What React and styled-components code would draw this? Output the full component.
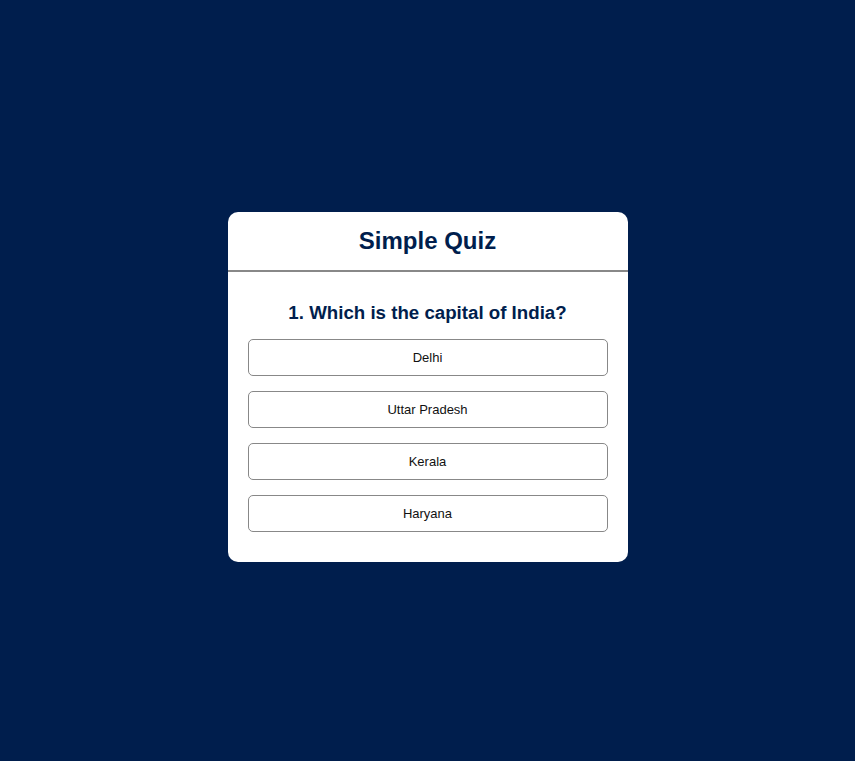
import React from 'react';
import styled, { createGlobalStyle } from 'styled-components';

const GlobalStyle = createGlobalStyle`
  html, body {
    margin: 0;
    padding: 0;
    background: #001e4d;
    font-family: "Liberation Sans", Arial, sans-serif;
  }
`;

const Page = styled.div`
  min-height: 761px;
  box-sizing: border-box;
  padding-top: 212px;
`;

const Card = styled.div`
  width: 400px;
  margin: 0 auto;
  background: #fff;
  border-radius: 10px;
  padding-bottom: 30px;
`;

const Title = styled.h1`
  margin: 0;
  height: 58px;
  display: flex;
  align-items: center;
  justify-content: center;
  font-size: 24px;
  font-weight: 700;
  color: #001e4d;
  border-bottom: 2px solid #888;
`;

const Quiz = styled.div`
  padding: 30px 20px 0;
`;

const Question = styled.h2`
  margin: 0 0 15px;
  font-size: 18.7px;
  line-height: 22px;
  font-weight: 700;
  color: #001e4d;
  text-align: center;
`;

const Answers = styled.div`
  display: flex;
  flex-direction: column;
  gap: 15px;
`;

const AnswerBtn = styled.button`
  width: 100%;
  height: 37px;
  background: #fff;
  border: 1px solid #888;
  border-radius: 5px;
  font-family: "Liberation Sans", Arial, sans-serif;
  font-size: 13px;
  color: #111;
  cursor: pointer;
  &:hover {
    background: #f2f2f2;
  }
`;

const answers = ['Delhi', 'Uttar Pradesh', 'Kerala', 'Haryana'];

function App() {
  return (
    <Page>
      <GlobalStyle />
      <Card>
        <Title>Simple Quiz</Title>
        <Quiz>
          <Question>1. Which is the capital of India?</Question>
          <Answers>
            {answers.map((a) => (
              <AnswerBtn key={a} type='button'>{a}</AnswerBtn>
            ))}
          </Answers>
        </Quiz>
      </Card>
    </Page>
  );
}

export default App;
